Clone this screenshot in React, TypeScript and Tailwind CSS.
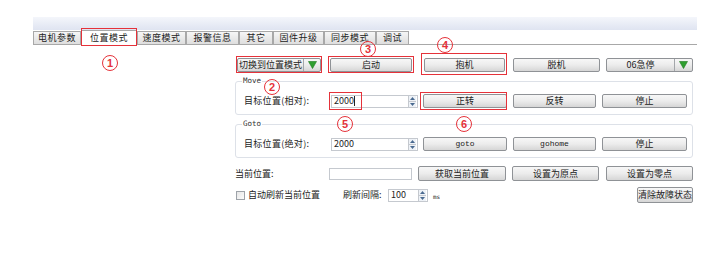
import React from "react";

const font = { fontFamily: '"Noto Sans CJK SC", "Noto Sans", sans-serif' };

function Btn({ w, label, mono, h = "h-[14px]" }: { w: string; label: string; mono?: boolean; h?: string }) {
  return (
    <div
      className={`${w} ${h} shrink-0 flex items-center justify-center rounded-[2px] border border-[#8f9296] bg-gradient-to-b from-[#f7f7f7] via-[#ececec] to-[#d6d6d6] text-[#222] ${mono ? "text-[8px]" : "text-[9px]"}`}
      style={mono ? { fontFamily: '"Liberation Mono", monospace' } : undefined}
    >
      {label}
    </div>
  );
}

function Tri() {
  return (
    <svg width="9" height="8" viewBox="0 0 9 8">
      <path d="M0.5 0.5 L8.5 0.5 L4.5 7.5 Z" fill="#2f9e2f" stroke="#1d7a1d" strokeWidth="0.6" />
    </svg>
  );
}

function Combo({ w, label, textW }: { w: string; label: string; textW: string }) {
  return (
    <div className={`${w} h-[14px] shrink-0 flex rounded-[2px] border border-[#8f9296] bg-gradient-to-b from-[#f7f7f7] via-[#ececec] to-[#d6d6d6] text-[9px] text-[#222]`}>
      <div className={`${textW} flex items-center justify-center border-r border-[#a3a6aa]`}>{label}</div>
      <div className="flex-1 flex items-center justify-center">
        <Tri />
      </div>
    </div>
  );
}

function Spin({ w, value, cursor }: { w: string; value: string; cursor?: boolean }) {
  return (
    <div className={`${w} h-[13px] shrink-0 flex items-center border border-[#c5c9cf] bg-white`}>
      <div className="flex-1 flex items-center pl-[2px] text-[9px] text-[#222]">
        {value}
        {cursor && <span className="inline-block w-px h-[10px] bg-[#222]" />}
      </div>
      <div className="w-[8px] h-full flex flex-col border-l border-[#c5c9cf] bg-[#eef2f7] mr-px">
        <div className="flex-1 flex items-center justify-center">
          <svg width="5" height="3" viewBox="0 0 5 3">
            <path d="M0 3 L2.5 0 L5 3 Z" fill="#4a6a90" />
          </svg>
        </div>
        <div className="flex-1 flex items-center justify-center border-t border-[#c5c9cf]">
          <svg width="5" height="3" viewBox="0 0 5 3">
            <path d="M0 0 L2.5 3 L5 0 Z" fill="#4a6a90" />
          </svg>
        </div>
      </div>
    </div>
  );
}

function Group({ title, children }: { title: string; children: React.ReactNode }) {
  return (
    <div className="relative w-[458px] rounded-[3px] border border-[#dde1e8] pt-[12px] pb-[6px] pl-[8px]">
      <div
        className="absolute left-[6px] top-[-6px] bg-white px-px text-[7.5px] leading-[10px] text-[#333]"
        style={{ fontFamily: '"DejaVu Sans Mono", monospace' }}
      >
        {title}
      </div>
      {children}
    </div>
  );
}

const tabs = [
  { t: "电机参数", w: "w-[48px]" },
  { t: "位置模式", w: "w-[56px]", sel: true },
  { t: "速度模式", w: "w-[49px]" },
  { t: "报警信息", w: "w-[53px]" },
  { t: "其它", w: "w-[34px]" },
  { t: "固件升级", w: "w-[51px]" },
  { t: "同步模式", w: "w-[52px]" },
  { t: "调试", w: "w-[33px]" },
];

function Circ({ n, x, y }: { n: string; x: string; y: string }) {
  return (
    <div
      className={`absolute ${x} ${y} w-[16px] h-[16px] rounded-full border-[1.5px] border-[#e5323a] flex items-center justify-center text-[11px] leading-[11px] font-semibold text-[#e5323a]`}
      style={{ fontFamily: '"Liberation Sans", sans-serif' }}
    >
      {n}
    </div>
  );
}

function RedBox({ cls }: { cls: string }) {
  return <div className={`absolute ${cls} border-[1.5px] border-[#e5323a]`} />;
}

export default function App() {
  return (
    <div className="relative w-[724px] h-[273px] bg-white overflow-hidden" style={font}>
      <div className="pt-[17px] pl-[33px]">
        <div className="w-[664px] h-[13px] bg-gradient-to-b from-[#f4f6fb] to-[#dfe4f1]" />
        <div className="w-[664px] h-[15px] flex items-end border-b border-[#a8a8a8]">
          {tabs.map((tb) =>
            tb.sel ? (
              <div
                key={tb.t}
                className={`${tb.w} h-[15px] -mb-px flex items-center justify-center bg-white border-x border-t border-[#a8a8a8] text-[9px] tracking-[0.5px] text-[#222]`}
              >
                {tb.t}
              </div>
            ) : (
              <div
                key={tb.t}
                className={`${tb.w} h-[13px] flex items-center justify-center border-l border-t border-r border-[#a8a8a8] bg-gradient-to-b from-[#f6f6f6] to-[#dedede] text-[9px] tracking-[0.5px] text-[#222]`}
              >
                {tb.t}
              </div>
            )
          )}
        </div>
      </div>

      <div className="ml-[235px] mt-[12px] w-[458px] flex flex-col">
        <div className="flex items-center h-[15px] pl-[2px]">
          <Combo w="w-[84px]" label="切换到位置模式" textW="w-[66px]" />
          <div className="ml-[9px]"><Btn w="w-[82px]" label="启动" /></div>
          <div className="ml-[12px]"><Btn w="w-[81px]" label="抱机" /></div>
          <div className="ml-[8px]"><Btn w="w-[87px]" label="脱机" /></div>
          <div className="ml-[6px]"><Combo w="w-[87px]" label="06急停" textW="w-[68px]" /></div>
        </div>

        <div className="mt-[9px]">
          <Group title="Move">
            <div className="flex items-center h-[14px] text-[9px] text-[#222]">
              <div className="w-[87px] tracking-[0.3px]">目标位置(相对):</div>
              <Spin w="w-[87px]" value="2000" cursor />
              <div className="ml-[5px]"><Btn w="w-[84px]" label="正转" /></div>
              <div className="ml-[6px]"><Btn w="w-[83px]" label="反转" /></div>
              <div className="ml-[6px]"><Btn w="w-[85px]" label="停止" /></div>
            </div>
          </Group>
        </div>

        <div className="mt-[9px]">
          <Group title="Goto">
            <div className="flex items-center h-[14px] text-[9px] text-[#222]">
              <div className="w-[87px] tracking-[0.3px]">目标位置(绝对):</div>
              <Spin w="w-[87px]" value="2000" />
              <div className="ml-[5px]"><Btn w="w-[84px]" label="goto" mono /></div>
              <div className="ml-[6px]"><Btn w="w-[83px]" label="gohome" mono /></div>
              <div className="ml-[6px]"><Btn w="w-[85px]" label="停止" /></div>
            </div>
          </Group>
        </div>

        <div className="mt-[8px] flex items-center h-[15px] text-[9px] text-[#222]">
          <div className="w-[94px]">当前位置:</div>
          <div className="w-[83px] h-[12px] border border-[#c5c9cf] bg-white" />
          <div className="ml-[6px]"><Btn w="w-[88px]" label="获取当前位置" h="h-[15px]" /></div>
          <div className="ml-[6px]"><Btn w="w-[87px]" label="设置为原点" h="h-[15px]" /></div>
          <div className="ml-[7px]"><Btn w="w-[87px]" label="设置为零点" h="h-[15px]" /></div>
        </div>

        <div className="mt-[6px] flex items-center h-[16px] text-[9px] text-[#222]">
          <div className="ml-px w-[9px] h-[9px] border border-[#9ea3a9] bg-gradient-to-br from-[#e6e6e6] to-[#fbfbfb]" />
          <div className="ml-[3px] w-[95px]">自动刷新当前位置</div>
          <div className="w-[45px]">刷新间隔:</div>
          <Spin w="w-[40px]" value="100" />
          <div className="ml-[5px] text-[6px] mt-[3px]" style={{ fontFamily: '"DejaVu Sans Mono", monospace' }}>ms</div>
          <div className="ml-auto"><Btn w="w-[56px]" label="清除故障状态" h="h-[16px]" /></div>
        </div>
      </div>

      <RedBox cls="left-[81px] top-[28px] w-[56px] h-[18px]" />
      <RedBox cls="left-[236px] top-[56px] w-[86px] h-[17px]" />
      <RedBox cls="left-[328px] top-[56px] w-[86px] h-[17px]" />
      <RedBox cls="left-[421px] top-[53px] w-[86px] h-[22px]" />
      <RedBox cls="left-[329px] top-[92px] w-[33px] h-[18px]" />
      <RedBox cls="left-[420px] top-[92px] w-[87px] h-[18px]" />

      <Circ n="1" x="left-[102px]" y="top-[55px]" />
      <Circ n="2" x="left-[264px]" y="top-[79px]" />
      <Circ n="3" x="left-[360px]" y="top-[41px]" />
      <Circ n="4" x="left-[437px]" y="top-[37px]" />
      <Circ n="5" x="left-[337px]" y="top-[116px]" />
      <Circ n="6" x="left-[456px]" y="top-[116px]" />
    </div>
  );
}
